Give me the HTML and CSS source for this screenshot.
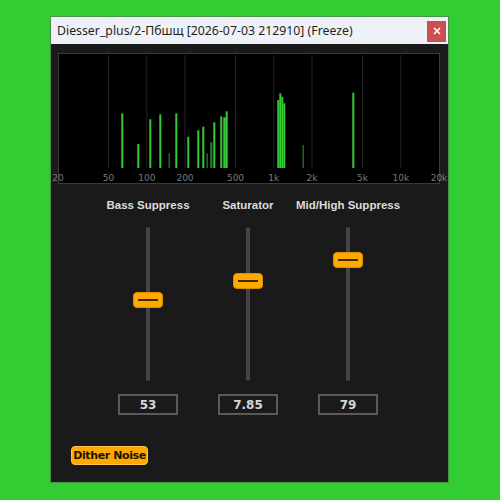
FILE: index.html
```html
<!DOCTYPE html>
<html>
<head>
<meta charset="utf-8">
<link rel="stylesheet" href="styles.css">
</head>
<body>
<div class="window">
  <div class="titlebar">
    <span class="title">Diesser_plus/2-Пбшщ [2026-07-03 212910] (Freeze)</span>
    <button class="close">
      <svg width="8" height="8" viewBox="0 0 8 8"><path d="M1 1L7 7M7 1L1 7" stroke="#fff" stroke-width="1.6"/></svg>
    </button>
  </div>
  <div class="content">
    <svg class="spectrum" width="382" height="131" viewBox="0 0 382 131">
      <rect x="0" y="0" width="382" height="131" fill="#000"/>
      <g stroke="#232323" stroke-width="1">
        <line x1="50.5" y1="2" x2="50.5" y2="115"/>
        <line x1="88.8" y1="2" x2="88.8" y2="115"/>
        <line x1="127" y1="2" x2="127" y2="115"/>
        <line x1="177.5" y1="2" x2="177.5" y2="115"/>
        <line x1="215.8" y1="2" x2="215.8" y2="115"/>
        <line x1="254" y1="2" x2="254" y2="115"/>
        <line x1="304.5" y1="2" x2="304.5" y2="115"/>
        <line x1="342.8" y1="2" x2="342.8" y2="115"/>
      </g>
      <g fill="#35c935">
        <rect x="63.3" y="60.3" width="2" height="54.7"/>
        <rect x="79.3" y="91" width="2" height="24"/>
        <rect x="91.3" y="66.3" width="2" height="48.7"/>
        <rect x="101.3" y="61.3" width="2" height="53.7"/>
        <rect x="117.3" y="60.3" width="2" height="54.7"/>
        <rect x="129.3" y="83.7" width="2" height="31.3"/>
        <rect x="139.3" y="77.3" width="2" height="37.7"/>
        <rect x="144.3" y="73.7" width="2" height="41.3"/>
        <rect x="155.3" y="69.3" width="2" height="45.7"/>
        <rect x="162.3" y="63.3" width="2" height="51.7"/>
        <rect x="165.3" y="64.3" width="2.5" height="50.7"/>
        <rect x="167.7" y="58.3" width="2" height="56.7"/>
        <rect x="219.3" y="47" width="2" height="68"/>
        <rect x="221.3" y="40.3" width="2" height="74.7"/>
        <rect x="223.3" y="43.7" width="2" height="71.3"/>
        <rect x="225.3" y="50.3" width="2" height="64.7"/>
        <rect x="294.3" y="39.7" width="2" height="75.3"/>
      </g>
      <g fill="#1c6b1c">
        <rect x="110.5" y="100.3" width="1.5" height="14.7"/>
        <rect x="148.5" y="100.3" width="1.5" height="14.7"/>
        <rect x="244.5" y="92" width="1.5" height="23"/>
      </g>
      <rect x="152.3" y="89.3" width="2" height="25.7" fill="#238a23"/>
      <rect x="0.5" y="0.5" width="381" height="130" fill="none" stroke="#3a3a3a" stroke-width="1"/>
      <g class="axis" fill="#7a7a7a" font-size="9" text-anchor="middle">
        <text x="0" y="128">20</text>
        <text x="50.5" y="128">50</text>
        <text x="88.8" y="128">100</text>
        <text x="127" y="128">200</text>
        <text x="177.5" y="128">500</text>
        <text x="215.8" y="128">1k</text>
        <text x="254" y="128">2k</text>
        <text x="304.5" y="128">5k</text>
        <text x="342.8" y="128">10k</text>
        <text x="381" y="128">20k</text>
      </g>
    </svg>

    <div class="controls">
      <div class="control">
        <div class="label">Bass Suppress</div>
        <div class="slider">
          <div class="track"></div>
          <div class="thumb" style="top: 65px"><span class="grip"></span></div>
        </div>
        <div class="value">53</div>
      </div>
      <div class="control">
        <div class="label">Saturator</div>
        <div class="slider">
          <div class="track"></div>
          <div class="thumb" style="top: 45.5px"><span class="grip"></span></div>
        </div>
        <div class="value">7.85</div>
      </div>
      <div class="control">
        <div class="label">Mid/High Suppress</div>
        <div class="slider">
          <div class="track"></div>
          <div class="thumb" style="top: 24.5px"><span class="grip"></span></div>
        </div>
        <div class="value">79</div>
      </div>
    </div>

    <button class="dither">Dither Noise</button>
  </div>
</div>
</body>
</html>
```

FILE: styles.css
```css
html, body {
  margin: 0;
  padding: 0;
}

body {
  width: 500px;
  height: 500px;
  background: #32cd32;
  padding: 17px 0 0 51px;
  box-sizing: border-box;
  font-family: "DejaVu Sans", sans-serif;
}

.window {
  width: 397px;
  height: 465px;
  background: #1a1a1a;
  box-shadow: 0 0 0 1px rgba(90, 90, 90, 0.5);
  display: flex;
  flex-direction: column;
}

.titlebar {
  height: 27px;
  background: #eef2f8;
  display: flex;
  align-items: center;
  justify-content: space-between;
  padding: 0 2px 0 6px;
}

.title {
  font-family: "Noto Sans", sans-serif;
  font-size: 12.3px;
  color: #1e1e1e;
}

.close {
  width: 19px;
  height: 21px;
  margin-top: 1px;
  border: none;
  padding: 0;
  background: #c9504f;
  display: flex;
  align-items: center;
  justify-content: center;
}

.content {
  display: flex;
  flex-direction: column;
  padding: 9px 0 0 7px;
}

.spectrum {
  display: block;
  overflow: visible;
}

.axis {
  font-family: "DejaVu Sans", sans-serif;
}

.controls {
  display: grid;
  grid-template-columns: repeat(3, 100px);
  margin: 13px 0 0 40px;
}

.control {
  display: flex;
  flex-direction: column;
  align-items: center;
}

.label {
  font-family: "Liberation Sans", sans-serif;
  font-weight: bold;
  font-size: 11.5px;
  color: #dcdcdc;
  height: 16px;
  line-height: 16px;
  white-space: nowrap;
}

.slider {
  position: relative;
  width: 30px;
  height: 154px;
  margin-top: 14px;
  display: flex;
  justify-content: center;
}

.track {
  width: 4px;
  height: 100%;
  background: #454545;
  border-radius: 2px;
}

.thumb {
  position: absolute;
  left: 0;
  width: 30px;
  height: 16px;
  box-sizing: border-box;
  background: #ffa800;
  border: 1px solid #d88a00;
  border-radius: 4px;
  display: flex;
  align-items: center;
  justify-content: center;
}

.grip {
  width: 20px;
  height: 2px;
  background: #3a2a00;
}

.value {
  margin-top: 13px;
  width: 60px;
  height: 21px;
  box-sizing: border-box;
  border: 2px solid #5a5a5a;
  font-family: "DejaVu Sans", sans-serif;
  font-weight: bold;
  font-size: 12px;
  color: #d6d6d6;
  display: flex;
  align-items: center;
  justify-content: center;
}

.dither {
  align-self: flex-start;
  margin: 31px 0 0 13px;
  width: 77px;
  height: 19px;
  padding: 0;
  box-sizing: border-box;
  background: #ffa800;
  border: 1px solid #ffc04d;
  border-radius: 4px;
  font-family: "DejaVu Sans", sans-serif;
  font-weight: bold;
  font-size: 11px;
  color: #1a1200;
  letter-spacing: -0.4px;
}
```
